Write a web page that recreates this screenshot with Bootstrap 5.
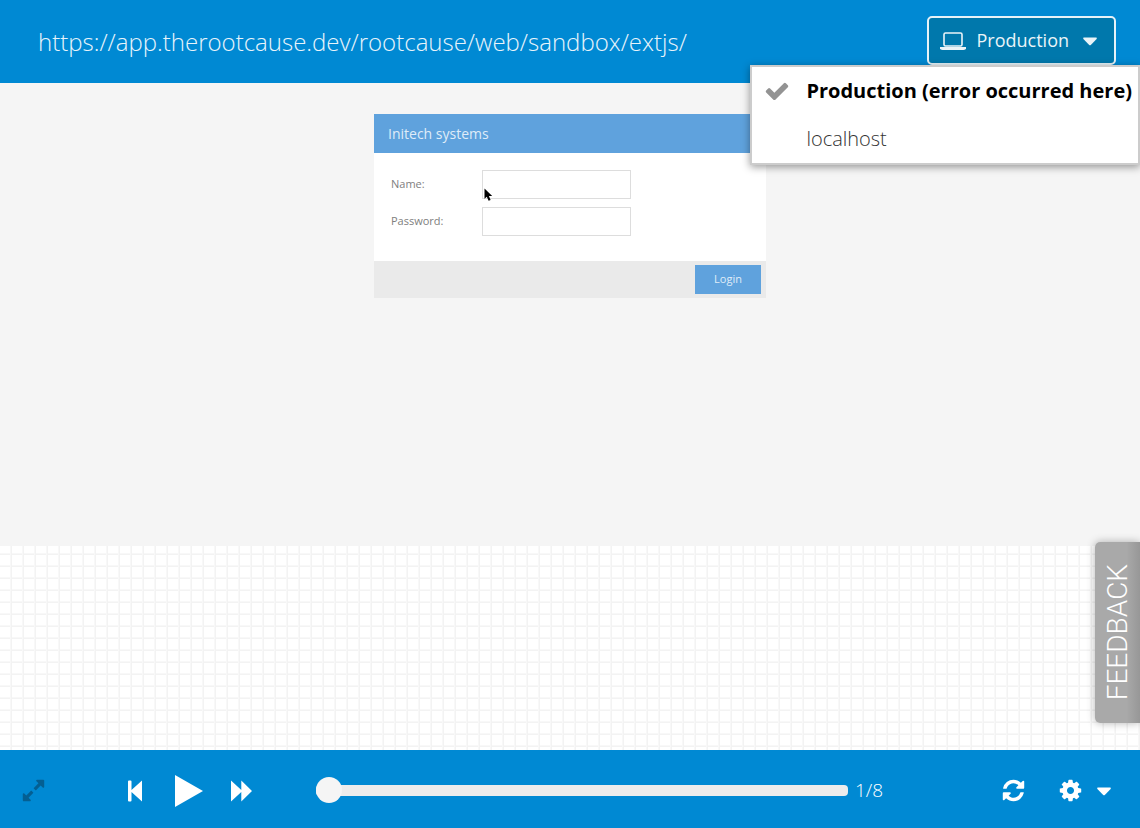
<!DOCTYPE html>
<html lang="en">
<head>
<meta charset="utf-8">
<meta name="viewport" content="width=device-width, initial-scale=1">
<title>Session replay</title>
<link href="https://cdn.jsdelivr.net/npm/bootstrap@5.3.0/dist/css/bootstrap.min.css" rel="stylesheet">
<style>
  body { font-family: "Open Sans", sans-serif; font-weight: 300; }
  svg { display: block; fill: currentColor; }
  .bar { background: #0089d3; color: #fff; }
  .topbar { height: 83px; padding: 0 24px 2px 38px; }
  .page-url { padding-top: 2px; font-size: 24px; line-height: 36px; color: #e8f4fb; }

  .env-toggle { height: 49px; padding: 0 17px 0 11px; gap: 10px; background: #0078ac; border: 2px solid #e6f2f8; border-radius: 5px; color: #eaf4f8; font-size: 18px; }
  .env-toggle .caret { margin-left: 4px; }
  .env-menu { --bs-dropdown-min-width: 0; top: 100%; right: -24px; padding: 0; border: 2px solid #ccc; border-radius: 0; box-shadow: 0 2px 8px rgba(0,0,0,.4); }
  .env-menu .dropdown-item { display: flex; align-items: center; height: 48px; padding: 0 6px 0 12px; font-size: 20px; font-weight: 300; color: #333; }
  .env-menu .active { background: #fff; color: #000; font-weight: 700; }
  .env-tick { width: 42px; color: #939393; flex: none; }

  .stage { background: #f5f5f5; padding-top: 31px; }
  .login { width: 392px; background: #fff; }
  .login-title { margin: 0; padding: 0 14px; font-size: 14px; line-height: 39px; font-weight: 400; background: #5fa2dd; color: #dfecf8; }
  .login-fields { padding: 17px 17px 25px; gap: 8px; }
  .login-fields label { width: 91px; font-size: 11px; font-weight: 400; color: #808080; }
  .login-fields input { width: 149px; height: 29px; padding: 0 6px; border: 1px solid #ddd; border-radius: 0; font-size: 12px; }
  .login-actions { padding: 4px 5px; background: #eaeaea; }
  .login-actions button { width: 66px; height: 29px; padding: 0; font-size: 11px; font-weight: 400; border: 0; border-radius: 0; background: #5fa2dd; color: #dfecf8; }
  .pointer { left: 110px; top: 74px; }

  .graph { height: 204px; background: #fff; background-image: linear-gradient(to left, #f3f3f3 1px, #f8f8f8 1px, #f8f8f8 2px, transparent 2px), linear-gradient(to top, #f3f3f3 1px, #f8f8f8 1px, #f8f8f8 2px, transparent 2px); background-size: 12px 12px; background-position: 0 9px; }
  .feedback { right: 0; bottom: 27px; width: 45px; height: 181px; padding: 0; border: 0; border-radius: 5px 0 0 5px; background: linear-gradient(to right, #a9a9a9 70%, #979797); box-shadow: 0 0 8px rgba(0,0,0,.3); color: #fff; font: 300 28px/45px Roboto, sans-serif; }
  .feedback span { writing-mode: vertical-rl; transform: rotate(180deg); }

  .player { height: 78px; padding: 3px 29px 0 21px; }
  .player button { padding: 0; border: 0; background: none; color: #fff; }
  .player .expand { color: #045f92; }
  .transport { margin-left: 82px; gap: 28px; }
  .seek { appearance: none; min-width: 0; height: 27px; margin: 0 7px 0 64px; background: none; }
  .seek::-webkit-slider-runnable-track { height: 11px; border-radius: 4px; background: #ececec; }
  .seek::-webkit-slider-thumb { appearance: none; width: 26px; height: 26px; margin-top: -8px; border-radius: 50%; background: #f5f5f5; }
  .step-count { width: 146px; font-size: 19px; }
  .options { gap: 14px; margin-left: 32px; }
</style>
</head>
<body class="d-flex flex-column min-vh-100">

<header class="bar topbar d-flex align-items-center justify-content-between">
  <div class="page-url">https://app.therootcause.dev/rootcause/web/sandbox/extjs/</div>
  <div class="dropdown">
    <button class="env-toggle d-flex align-items-center" type="button" aria-expanded="true">
      <svg width="26" height="20" viewBox="0 0 26 20" aria-hidden="true"><rect x="4" y="2" width="18" height="13" rx="1.5" fill="none" stroke="currentColor" stroke-width="1.6"/><path d="M0 16h26v1.2q0 1.8-2.5 1.8h-21Q0 19 0 17.200z"/></svg>
      Production
      <svg class="caret" width="14" height="16" viewBox="0 0 14 16" aria-hidden="true"><path d="M.8 4.500h12.400q1 .5.400 1.400l-5.800 6q-.8.700-1.600 0l-5.800-6Q-.2 5 .8 4.500z"/></svg>
    </button>
    <ul class="dropdown-menu env-menu show">
      <li><a class="dropdown-item active" href="#"><span class="env-tick"><svg width="26" height="26" viewBox="0 0 1792 1792" aria-hidden="true"><path d="M1671 566q0 40-28 68l-724 724-136 136q-28 28-68 28t-68-28l-136-136-362-362q-28-28-28-68t28-68l136-136q28-28 68-28t68 28l294 295 656-657q28-28 68-28t68 28l136 136q28 28 28 68z"/></svg></span>Production (error occurred here)</a></li>
      <li><a class="dropdown-item" href="#"><span class="env-tick"></span>localhost</a></li>
    </ul>
  </div>
</header>

<main class="flex-grow-1 d-flex flex-column position-relative">
  <section class="stage flex-grow-1">
    <form class="login mx-auto position-relative">
      <h1 class="login-title">Initech systems</h1>
      <div class="login-fields d-flex flex-column">
        <div class="d-flex align-items-center"><label for="name">Name:</label><input id="name" type="text"></div>
        <div class="d-flex align-items-center"><label for="password">Password:</label><input id="password" type="password"></div>
      </div>
      <div class="login-actions d-flex justify-content-end"><button type="button">Login</button></div>
      <svg class="pointer position-absolute" width="9" height="14" viewBox="0 0 9 14" aria-hidden="true"><path d="M.5.500v10.300l2.300-2 1.800 4 2-.9-1.700-3.800h3.300z" fill="#000"/></svg>
    </form>
  </section>
  <section class="graph"></section>
  <button class="feedback position-absolute d-flex align-items-center justify-content-center" type="button"><span>FEEDBACK</span></button>
</main>

<footer class="bar player d-flex align-items-center">
  <button class="expand" type="button" aria-label="Full screen"><svg width="25" height="25" viewBox="0 0 1792 1792"><path d="M883 1056q0 13-10 23l-332 332 144 144q19 19 19 45t-19 45-45 19h-448q-26 0-45-19t-19-45v-448q0-26 19-45t45-19 45 19l144 144 332-332q10-10 23-10t23 10l114 114q10 10 10 23zm781-864v448q0 26-19 45t-45 19-45-19l-144-144-332 332q-10 10-23 10t-23-10l-114-114q-10-10-10-23t10-23l332-332-144-144q-19-19-19-45t19-45 45-19h448q26 0 45 19t19 45z"/></svg></button>
  <div class="transport d-flex align-items-center">
    <button type="button" aria-label="Previous"><svg width="19" height="22" viewBox="0 0 19 22"><path d="M0 1.500Q0 .5 1 .5h1.500q1 0 1 1V10L14 .5v21L3.500 12v8.500q0 1-1 1H1q-1 0-1-1z"/></svg></button>
    <button type="button" aria-label="Play"><svg width="28" height="32" viewBox="0 0 28 32"><path d="M0 0l28 16L0 32z"/></svg></button>
    <button type="button" aria-label="Fast forward"><svg width="21" height="22" viewBox="0 0 21 22"><path d="M0 .5L10.300 10V.500L21 11 10.300 21.500V12L0 21.500z"/></svg></button>
  </div>
  <input class="seek flex-grow-1" type="range" min="1" max="8" value="1" aria-label="Step">
  <div class="step-count">1/8</div>
  <button type="button" aria-label="Reload"><svg width="25" height="25" viewBox="0 0 1792 1792"><path d="M1639 1056q0 5-1 7-64 268-268 434.500t-478 166.500q-146 0-282.500-55t-243.500-157l-129 129q-19 19-45 19t-45-19-19-45v-448q0-26 19-45t45-19h448q26 0 45 19t19 45-19 45l-137 137q71 66 161 102t187 36q134 0 250-65t186-179q11-17 53-117 8-23 30-23h192q13 0 22.500 9.500t9.500 22.500zm25-800v448q0 26-19 45t-45 19h-448q-26 0-45-19t-19-45 19-45l138-138q-148-137-349-137-134 0-250 65t-186 179q-11 17-53 117-8 23-30 23h-199q-13 0-22.500-9.500t-9.500-22.500v-7q65-268 270-434.500t480-166.500q146 0 284 55.500t245 156.500l130-129q19-19 45-19t45 19 19 45z"/></svg></button>
  <button class="options d-flex align-items-center" type="button" aria-label="Settings"><svg width="25" height="25" viewBox="0 0 1792 1792"><path d="M1152 896q0-106-75-181t-181-75-181 75-75 181 75 181 181 75 181-75 75-181zm512-109v222q0 12-8 23t-20 13l-185 28q-19 54-39 91 35 50 107 138 10 12 10 25t-9 23q-27 37-99 108t-94 71q-12 0-26-9l-138-108q-44 23-91 38-16 136-29 186-7 28-36 28h-222q-14 0-24.500-8.500t-11.500-21.500l-28-184q-49-16-90-37l-141 107q-10 9-25 9-14 0-25-11-126-114-165-168-7-10-7-23 0-12 8-23 15-21 51-66.500t54-70.500q-27-50-41-99l-183-27q-13-2-21-12.500t-8-23.500v-222q0-12 8-23t19-13l186-28q14-46 39-92-40-57-107-138-10-12-10-24 0-10 9-23 26-36 98.500-107.500t94.500-71.500q13 0 26 10l138 107q44-23 91-38 16-136 29-186 7-28 36-28h222q14 0 24.500 8.500t11.500 21.500l28 184q49 16 90 37l142-107q9-9 24-9 13 0 25 10 129 119 165 170 7 8 7 22 0 12-8 23-15 21-51 66.500t-54 70.500q26 50 41 98l183 28q13 2 21 12.500t8 23.500z"/></svg><svg width="14" height="16" viewBox="0 0 14 16"><path d="M.8 4.500h12.400q1 .5.400 1.400l-5.800 6q-.8.700-1.600 0l-5.800-6Q-.2 5 .8 4.500z"/></svg></button>
</footer>

<script src="https://cdn.jsdelivr.net/npm/bootstrap@5.3.0/dist/js/bootstrap.bundle.min.js"></script>
</body>
</html>
